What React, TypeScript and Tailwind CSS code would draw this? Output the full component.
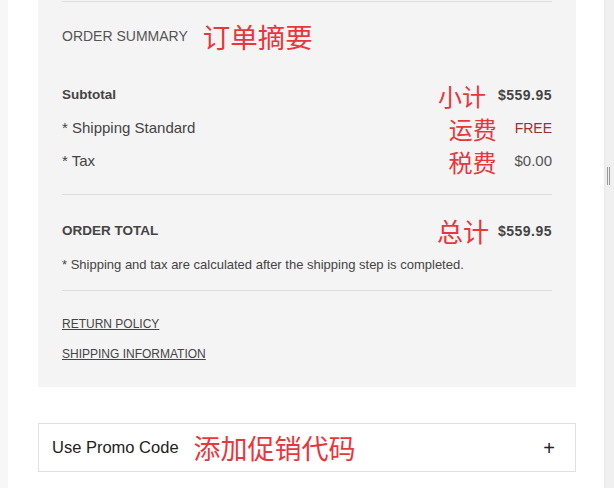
import React from 'react';

const zh = "font-['Noto_Sans_CJK_SC',sans-serif] text-[#e8363c] leading-none";
const boldVal = 'text-[14px] font-bold tracking-[0.5px] text-[#444]';

const SummaryRow = ({
  label,
  note,
  value,
  bold,
  gap,
  valueClass,
}: {
  label: string;
  note: string;
  value: string;
  bold?: boolean;
  gap: string;
  valueClass?: string;
}) => (
  <div className="flex h-[33px] items-center justify-between">
    <span className={bold ? 'text-[13.5px] font-bold text-[#444]' : 'text-[15px] text-[#444]'}>
      {label}
    </span>
    <div className={`flex items-center ${gap}`}>
      <span className={`${zh} text-[24px]`}>{note}</span>
      <span className={valueClass ?? boldVal}>{value}</span>
    </div>
  </div>
);

export default function App() {
  return (
    <div className="flex h-[488px] w-[614px] overflow-hidden bg-white font-['Liberation_Sans',Arial,sans-serif]">
      {/* left gutter */}
      <div className="w-[8px] shrink-0 bg-[#f7f7f7]" />

      <div className="w-[596px] shrink-0 pl-[30px] pr-[28px]">
        {/* Order summary panel */}
        <div className="bg-[#f4f4f4] px-6 pb-[23px] pt-px">
          <div className="border-t border-[#dedede]" />

          <div className="flex h-[67px] items-center gap-[15px] pt-[2px]">
            <span className="text-[14px] text-[#555]">ORDER SUMMARY</span>
            <span className={`${zh} text-[27.5px]`}>订单摘要</span>
          </div>

          <div className="mt-[10px]">
            <SummaryRow label="Subtotal" note="小计" value="$559.95" bold gap="gap-[12px]" />
            <SummaryRow
              label="* Shipping Standard"
              note="运费"
              value="FREE"
              gap="gap-[18px]"
              valueClass="text-[14px] text-[#9e2f2b]"
            />
            <SummaryRow
              label="* Tax"
              note="税费"
              value="$0.00"
              gap="gap-[18px]"
              valueClass="text-[15px] text-[#555]"
            />
          </div>

          <div className="mt-[16px] border-t border-[#dedede]" />

          <div className="mt-[20px] flex h-[32px] items-center justify-between">
            <span className="text-[13.5px] font-bold text-[#444]">ORDER TOTAL</span>
            <div className="flex items-center gap-[9px]">
              <span className={`${zh} text-[26px]`}>总计</span>
              <span className={boldVal}>$559.95</span>
            </div>
          </div>

          <p className="mt-[8px] flex h-[20px] items-center text-[13px] text-[#444]">
            * Shipping and tax are calculated after the shipping step is completed.
          </p>

          <div className="mt-[15px] border-t border-[#dedede]" />

          <div className="mt-[23px] flex h-[20px] items-center">
            <a className="text-[12px] text-[#444] underline">RETURN POLICY</a>
          </div>
          <div className="mt-[10px] flex h-[20px] items-center">
            <a className="text-[12px] text-[#444] underline">SHIPPING INFORMATION</a>
          </div>
        </div>

        {/* Promo code */}
        <div className="mt-[36px] flex h-[49px] items-center border border-[#e0e0e0] pl-[13px] pr-[20px]">
          <span className="text-[16.5px] text-[#222]">Use Promo Code</span>
          <span className={`${zh} ml-[15px] text-[27px]`}>添加促销代码</span>
          <span className="ml-auto text-[20px] font-light leading-none text-[#222]">+</span>
        </div>
      </div>

      {/* right scrollbar edge */}
      <div className="flex w-[10px] shrink-0 border-l-2 border-[#ececec] bg-[#f0f0f0] pt-[167px]">
        <div className="ml-[1px] flex h-[18px] gap-[1px]">
          <div className="w-px bg-[#999]" />
          <div className="w-px bg-[#999]" />
        </div>
      </div>
    </div>
  );
}
